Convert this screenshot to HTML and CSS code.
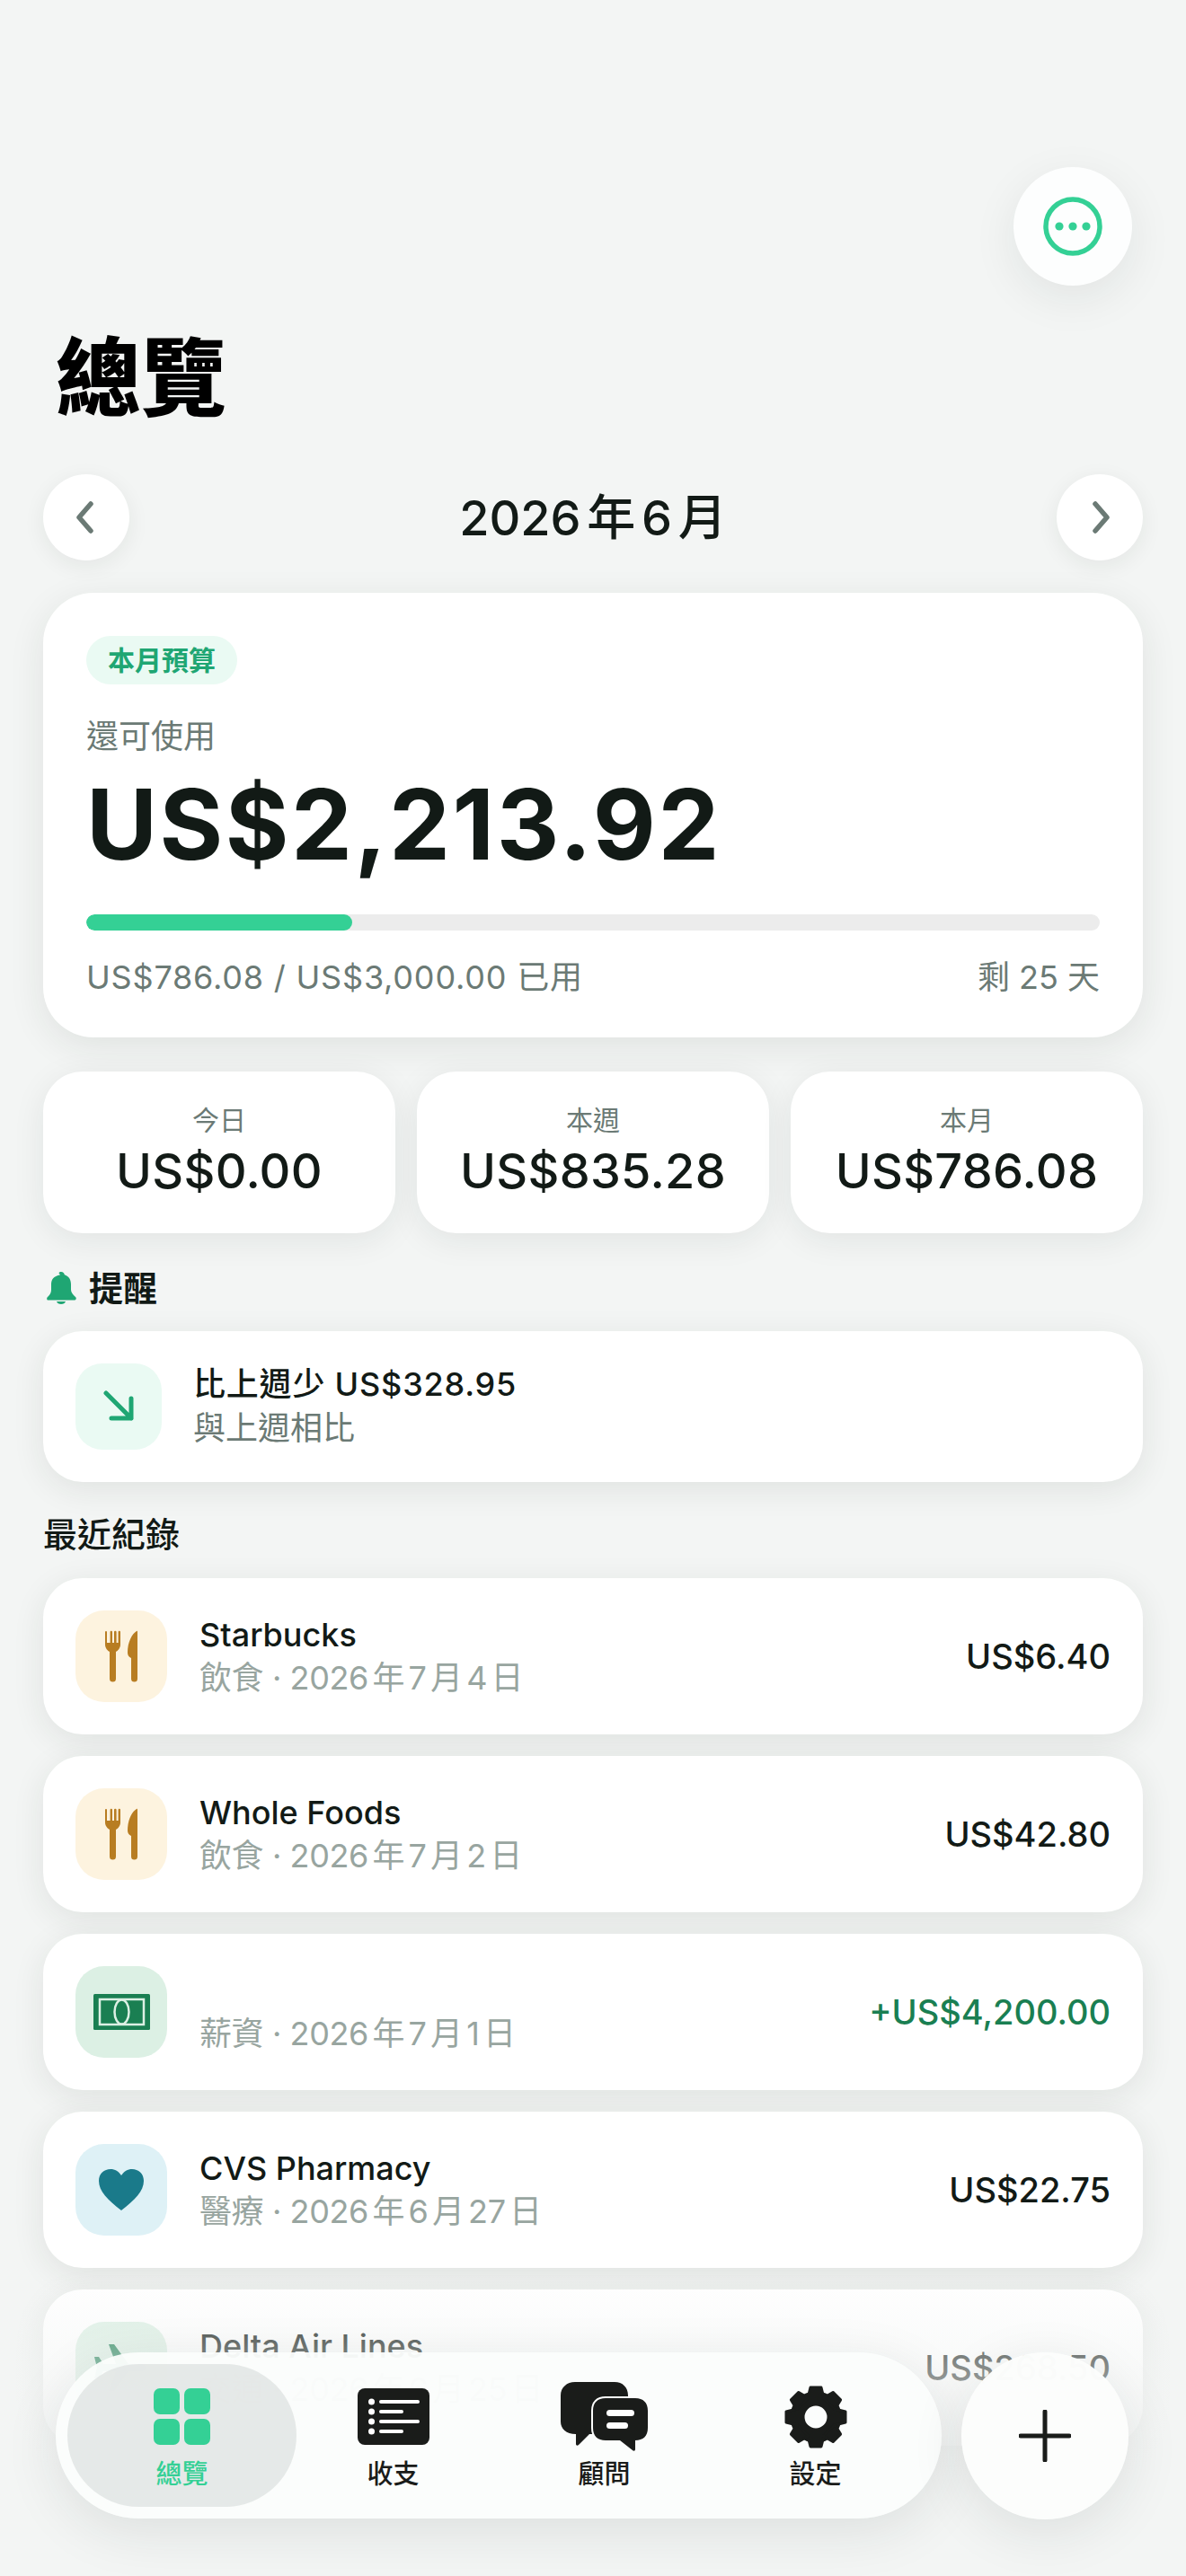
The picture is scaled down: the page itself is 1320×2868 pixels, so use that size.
FILE: index.html
```html
<!DOCTYPE html>
<html lang="zh-Hant">
<head>
<meta charset="utf-8">
<title>總覽</title>
<link rel="stylesheet" href="styles.css">
</head>
<body>
<div class="top-row">
  <div class="more-btn">
    <svg width="66" height="66" viewBox="0 0 66 66"><circle cx="33" cy="33" r="30" fill="none" stroke="#34d095" stroke-width="5.5"/><circle cx="18" cy="33" r="4.6" fill="#34d095"/><circle cx="33" cy="33" r="4.6" fill="#34d095"/><circle cx="48" cy="33" r="4.6" fill="#34d095"/></svg>
  </div>
</div>
<h1 class="title">總覽</h1>

<div class="month-row">
  <div class="round-btn"><svg width="24" height="36" viewBox="0 0 24 36"><path d="M17 3 L4 18 L17 33" fill="none" stroke="#6b7a75" stroke-width="5.5" stroke-linecap="round" stroke-linejoin="round"/></svg></div>
  <div class="month">2026年6月</div>
  <div class="round-btn"><svg width="24" height="36" viewBox="0 0 24 36"><path d="M7 3 L20 18 L7 33" fill="none" stroke="#6b7a75" stroke-width="5.5" stroke-linecap="round" stroke-linejoin="round"/></svg></div>
</div>

<div class="hero">
  <span class="badge">本月預算</span>
  <div class="hero-label">還可使用</div>
  <div class="hero-amount">US$2,213.92</div>
  <div class="bar"><div class="bar-fill" style="width:26.2%"></div></div>
  <div class="hero-foot"><span class="spent">US$786.08 / US$3,000.00 已用</span><span>剩 25 天</span></div>
</div>

<div class="stats">
  <div class="stat"><div class="stat-label">今日</div><div class="stat-value">US$0.00</div></div>
  <div class="stat"><div class="stat-label">本週</div><div class="stat-value">US$835.28</div></div>
  <div class="stat"><div class="stat-label">本月</div><div class="stat-value">US$786.08</div></div>
</div>

<div class="section alert-head">
  <svg width="36" height="36" viewBox="0 0 36 36"><path d="M18 0c2.200 0 3.600 1.500 3.800 3.200C26.800 4.800 29 9 29 14v6c0 3 2 5 5 8 1.500 1.500.8 3.500-1.500 3.500h-29C2.200 31.500 1.500 29.500 3 28c3-3 4-5 4-8v-6c0-5 2.200-9.200 10.200-10.800C14.400 1.500 15.800 0 18 0z" fill="#1fa673"/><path d="M13 33h10c-.6 1.900-2.500 3-5 3s-4.400-1.100-5-3z" fill="#1fa673"/></svg>
  <span>提醒</span>
</div>
<div class="alert card">
  <div class="alert-icon"><svg width="36" height="36" viewBox="0 0 36 36"><path d="M4 3 L32 31 M32 9 V31 H10" fill="none" stroke="#1fa673" stroke-width="5" stroke-linecap="round" stroke-linejoin="round"/></svg></div>
  <div>
    <div class="alert-title">比上週少 US$328.95</div>
    <div class="alert-sub">與上週相比</div>
  </div>
</div>

<div class="section recent-head">最近紀錄</div>

<div class="rows">
  <div class="row card">
    <div class="cat cat-food">
      <svg width="36" height="58" viewBox="0 0 36 58"><path d="M0 2v14c0 4 3 7 5 8v30a3.500 3.500 0 0 0 7 0V24c2-1 5-4 5-8V2a1.200 1.200 0 0 0-2.400 0v12h-2V2a1.300 1.300 0 0 0-2.600 0v12h-2V2a1.200 1.200 0 0 0-2.400 0v12H2V2a1 1 0 0 0-2 0z" fill="#b87d22"/><path d="M35 1c-5 3-10 12-10 24 0 3 1.500 5 4 6v23a3.500 3.500 0 0 0 7 0V2c0-1-.4-1.400-1-1z" fill="#b87d22"/></svg>
    </div>
    <div class="row-text"><div class="row-name">Starbucks</div><div class="row-meta">飲食 · 2026年7月4日</div></div>
    <div class="row-amount">US$6.40</div>
  </div>
  <div class="row card">
    <div class="cat cat-food">
      <svg width="36" height="58" viewBox="0 0 36 58"><path d="M0 2v14c0 4 3 7 5 8v30a3.500 3.500 0 0 0 7 0V24c2-1 5-4 5-8V2a1.200 1.200 0 0 0-2.400 0v12h-2V2a1.300 1.300 0 0 0-2.600 0v12h-2V2a1.200 1.200 0 0 0-2.400 0v12H2V2a1 1 0 0 0-2 0z" fill="#b87d22"/><path d="M35 1c-5 3-10 12-10 24 0 3 1.500 5 4 6v23a3.500 3.500 0 0 0 7 0V2c0-1-.4-1.400-1-1z" fill="#b87d22"/></svg>
    </div>
    <div class="row-text"><div class="row-name">Whole Foods</div><div class="row-meta">飲食 · 2026年7月2日</div></div>
    <div class="row-amount">US$42.80</div>
  </div>
  <div class="row card">
    <div class="cat cat-pay">
      <svg width="63" height="40" viewBox="0 0 63 40"><rect width="63" height="40" rx="1.500" fill="#1a7f52"/><rect x="7" y="6" width="49" height="28" fill="none" stroke="#dcf0e4" stroke-width="2.500"/><ellipse cx="31.500" cy="20" rx="8" ry="13.500" fill="none" stroke="#dcf0e4" stroke-width="2.500"/></svg>
    </div>
    <div class="row-text"><div class="row-name">&nbsp;</div><div class="row-meta">薪資 · 2026年7月1日</div></div>
    <div class="row-amount income">+US$4,200.00</div>
  </div>
  <div class="row card">
    <div class="cat cat-health">
      <svg width="50" height="46" viewBox="0 0 50 46"><path d="M25 46C10 34 0 25 0 13 0 5 6 0 13 0c5 0 9 2.500 12 7 3-4.500 7-7 12-7 7 0 13 5 13 13 0 12-10 21-25 33z" fill="#1a7a8a"/></svg>
    </div>
    <div class="row-text"><div class="row-name">CVS Pharmacy</div><div class="row-meta">醫療 · 2026年6月27日</div></div>
    <div class="row-amount">US$22.75</div>
  </div>
  <div class="row card">
    <div class="cat cat-pay">
      <svg width="60" height="52" viewBox="0 0 60 52"><path d="M58 26c0-2-3-4-7-4H38L22 0h-6l8 22H10L5 14H0l3 12-3 12h5l5-8h14l-8 22h6l16-22h13c4 0 7-2 7-4z" fill="#1a7f52"/></svg>
    </div>
    <div class="row-text"><div class="row-name">Delta Air Lines</div><div class="row-meta">交通 · 2026年6月25日</div></div>
    <div class="row-amount">US$268.50</div>
  </div>
</div>

<div class="fade"></div>

<div class="tabbar">
  <div class="tab tab-on">
    <svg width="64" height="64" viewBox="0 0 64 64" fill="#34d095"><rect width="29" height="29" rx="7"/><rect x="34" width="29" height="29" rx="7"/><rect y="34" width="29" height="29" rx="7"/><rect x="34" y="34" width="29" height="29" rx="7"/></svg>
    <span>總覽</span>
  </div>
  <div class="tab">
    <svg width="80" height="64" viewBox="0 0 80 64"><rect width="80" height="63" rx="8" fill="#1a1c1a"/><g fill="#fff"><circle cx="15.500" cy="15" r="3.500"/><circle cx="15.500" cy="26" r="3.500"/><circle cx="15.500" cy="37" r="3.500"/><circle cx="15.500" cy="48" r="3.500"/><rect x="24" y="13" width="45" height="4" rx="2"/><rect x="24" y="24" width="27" height="4" rx="2"/><rect x="24" y="35" width="45" height="4" rx="2"/><rect x="24" y="46" width="27" height="4" rx="2"/></g></svg>
    <span>收支</span>
  </div>
  <div class="tab">
    <svg class="icon-chat" width="97" height="77" viewBox="0 0 97 77"><path d="M16 0h44c9 0 15 6 15 15v30c0 8-6 13-15 13H32L20 70c-1 1-3 1-3-1V58C6 58 0 52 0 44V15C0 6 7 0 16 0z" fill="#1a1c1a"/><path d="M50 18h33c9 0 14 5 14 14v19c0 9-5 14-14 14v10c0 2-2 2-3 1L66 65H50c-9 0-14-5-14-14V32c0-9 5-14 14-14z" fill="#1a1c1a" stroke="#fcfdfc" stroke-width="4" paint-order="stroke"/><rect x="51" y="31" width="31" height="7" rx="3.500" fill="#fff"/><rect x="51" y="45" width="24" height="7" rx="3.500" fill="#fff"/></svg>
    <span>顧問</span>
  </div>
  <div class="tab">
    <svg class="icon-gear" width="74" height="72" viewBox="0 0 72 72">
      <defs><path id="tooth" d="M30 3h12l3 12H27z" fill="#1a1c1a" stroke="#1a1c1a" stroke-width="3" stroke-linejoin="round"/></defs>
      <circle cx="36" cy="36" r="20.500" fill="none" stroke="#1a1c1a" stroke-width="16"/>
      <use href="#tooth"/><use href="#tooth" transform="rotate(45 36 36)"/><use href="#tooth" transform="rotate(90 36 36)"/><use href="#tooth" transform="rotate(135 36 36)"/><use href="#tooth" transform="rotate(180 36 36)"/><use href="#tooth" transform="rotate(225 36 36)"/><use href="#tooth" transform="rotate(270 36 36)"/><use href="#tooth" transform="rotate(315 36 36)"/>
    </svg>
    <span>設定</span>
  </div>
</div>
<div class="add-btn">
  <svg width="58" height="58" viewBox="0 0 58 58"><path d="M29 2V56 M2 29H56" fill="none" stroke="#1a1c1a" stroke-width="5" stroke-linecap="round"/></svg>
</div>
</body>
</html>
```

FILE: styles.css
```css
html, body {margin:0; padding:0;}
body {position:relative; width:1320px; height:2868px; overflow:hidden; background-color:#f3f5f4; color:#121a16; font-family:Inter, "Noto Sans CJK TC", sans-serif; text-autospace:normal;}

.card {background-color:#fff; border-radius:44px; box-shadow:0 8px 36px rgba(30,40,35,.09);}

.top-row {display:flex; justify-content:flex-end; padding:186px 60px 0 0;}
.more-btn {width:132px; height:132px; border-radius:50%; background-color:#fdfefe; display:flex; align-items:center; justify-content:center; box-shadow:0 14px 50px rgba(30,40,35,.08);}
.title {margin:47px 0 0 62px; font-size:95px; line-height:114px; font-weight:900; color:#000;}

.month-row {display:flex; align-items:center; justify-content:space-between; margin:49px 48px 0;}
.round-btn {width:96px; height:96px; border-radius:50%; background-color:#fff; display:flex; align-items:center; justify-content:center; box-shadow:0 6px 24px rgba(30,40,35,.07);}
.month {font-size:54px; font-weight:500; padding-bottom:7px;}

.hero {margin:36px 48px 0; padding:48px 48px 44px; height:403px; background-color:#fff; border-radius:56px; box-shadow:0 10px 40px rgba(30,40,35,.09);}
.badge {display:inline-block; padding:0 24px; height:54px; line-height:54px; border-radius:27px; background-color:#eafaf3; color:#1fa673; font-size:30px; font-weight:700;}
.hero-label {margin-top:34px; font-size:36px; line-height:48px; color:#6b7a75;}
.hero-amount {margin-top:14px; font-size:108px; line-height:120px; font-weight:700; letter-spacing:2.5px;}
.bar {margin-top:40px; height:18px; border-radius:9px; background-color:#ececec; overflow:hidden;}
.bar-fill {height:100%; border-radius:9px; background-color:#34d095;}
.hero-foot {display:flex; justify-content:space-between; margin-top:28px; font-size:36px; line-height:48px; color:#6b7a75;}
.spent {letter-spacing:.8px;}

.stats {display:flex; gap:24px; margin:38px 48px 0;}
.stat {flex:1; height:180px; background-color:#fff; border-radius:44px; text-align:center; box-shadow:0 8px 36px rgba(30,40,35,.08);}
.stat-label {margin-top:32px; font-size:30px; line-height:44px; color:#6b7a75;}
.stat-value {font-size:54px; line-height:70px; font-weight:550; letter-spacing:.3px;}

.section {font-size:38px; line-height:52px; font-weight:600; margin-left:48px;}
.alert-head {display:flex; align-items:center; gap:13px; margin-top:35px;}
.alert-head svg {margin-left:2px;}
.alert {display:flex; align-items:center; gap:35px; height:168px; margin:22px 48px 0; padding:0 36px;}
.alert-icon {width:96px; height:96px; border-radius:30px; background-color:#eafaf3; display:flex; align-items:center; justify-content:center;}
.alert-title {font-size:36px; line-height:48px; font-weight:500; letter-spacing:.8px;}
.alert-sub {font-size:36px; line-height:50px; color:#6b7a75;}
.recent-head {margin-top:32px; font-weight:500;}

.rows {margin:23px 48px 0;}
.row {display:flex; align-items:center; height:174px; margin-bottom:24px; padding:0 36px;}
.cat {flex:none; width:102px; height:102px; border-radius:32px; display:flex; align-items:center; justify-content:center;}
.cat-food {background-color:#fdf3df;}
.cat-pay {background-color:#dcf0e4;}
.cat-health {background-color:#def1f6;}
.row-text {flex:1; margin-left:36px;}
.row-name {font-size:36px; line-height:48px; font-weight:500;}
.row-meta {font-size:36px; line-height:48px; color:#98a5a0; letter-spacing:-.4px;}
.row-amount {font-size:38px; font-weight:500;}
.income {color:#1a7f52;}

/* list fades out under the tab bar */
.fade {position:absolute; left:0; right:0; bottom:0; height:340px; background:linear-gradient(to bottom, rgba(243,245,244,0), rgba(243,245,244,.5) 30%, rgba(243,245,244,.92) 62%, #f3f5f4);}

.tabbar {position:absolute; left:62px; top:2619px; width:986px; height:185px; box-sizing:border-box; padding:13px 0 13px 23px; display:flex; border-radius:93px; background-color:rgba(251,253,252,.95); box-shadow:0 14px 60px rgba(30,40,35,.1);}
.tab {width:235px; display:flex; flex-direction:column; align-items:center; font-size:29px; font-weight:500; color:#1a1c1a; padding-top:27px; box-sizing:border-box;}
.tab svg {display:block;}
.tab span {margin-top:12px; line-height:40px;}
.icon-chat {margin:-7px 0 -6px;}
.icon-gear {margin:-4px 0;}
.tab-on {flex:none; width:255px; margin:0 -10px; border-radius:80px; background-color:rgba(224,228,226,.8); color:#34d095;}
.add-btn {position:absolute; left:1070px; top:2619px; width:186px; height:186px; border-radius:50%; background-color:rgba(252,253,252,.98); display:flex; align-items:center; justify-content:center; box-shadow:0 14px 60px rgba(30,40,35,.1);}
```
